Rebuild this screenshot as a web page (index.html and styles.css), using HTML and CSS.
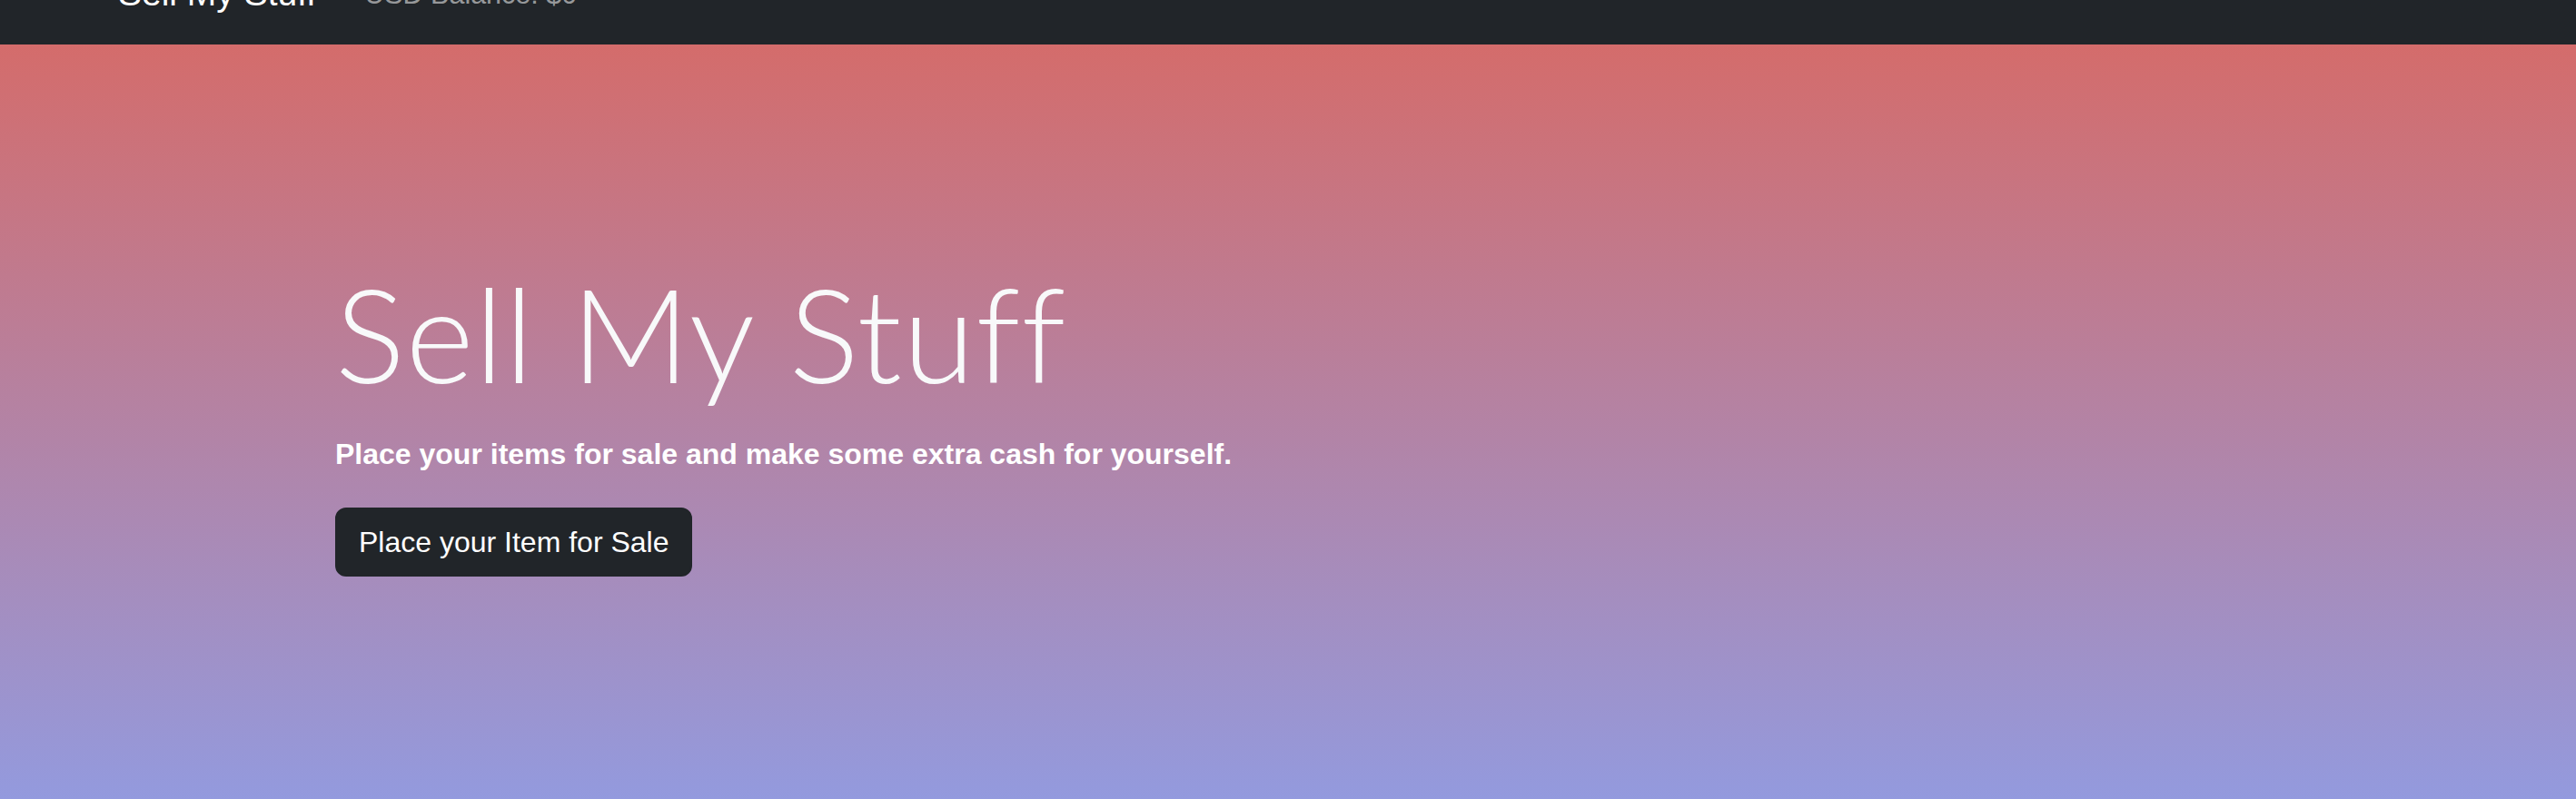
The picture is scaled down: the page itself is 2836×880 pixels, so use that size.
FILE: index.html
```html
<!DOCTYPE html>
<html lang="en">
<head>
<meta charset="utf-8">
<title>Sell My Stuff</title>
<link rel="stylesheet" href="styles.css">
</head>
<body>
<div class="page">
  <nav class="navbar">
    <a class="brand" href="#">Sell My Stuff</a>
    <a class="nav-link" href="#">USD Balance: $0</a>
  </nav>
  <header class="hero">
    <div class="hero-inner">
      <h1 class="display">Sell My Stuff</h1>
      <p class="lead">Place your items for sale and make some extra cash for yourself.</p>
      <a class="btn" href="#">Place your Item for Sale</a>
    </div>
  </header>
</div>
</body>
</html>
```
FILE: styles.css
```css
html, body {
  margin: 0;
  padding: 0;
}
body {
  font-family: "Liberation Sans", Arial, sans-serif;
  font-size: 32px;
  line-height: 1.5;
  color: #212529;
  background: #fff;
  overflow: hidden;
}
a { text-decoration: none; }

.page {
  margin-top: -63px;
}

.navbar {
  height: 112px;
  box-sizing: border-box;
  padding: 16px 0 16px 130px;
  background: #212529;
  display: flex;
  align-items: center;
}
.brand {
  color: #fff;
  font-size: 39px;
  line-height: 60px;
  padding: 10px 0;
  margin-right: 37px;
}
.nav-link {
  color: rgba(255, 255, 255, 0.55);
  font-size: 30.5px;
  line-height: 48px;
  padding: 16px;
}

.hero {
  height: 900px;
  background: linear-gradient(to bottom, #d46c6b 0px, #939ade 832px);
}
.hero-inner {
  padding: 232px 0 0 369px;
  display: flex;
  flex-direction: column;
  align-items: flex-start;
}
.display {
  margin: 0;
  font-family: Lato, "Liberation Sans", sans-serif;
  font-weight: 300;
  font-size: 144px;
  line-height: 1.2;
  letter-spacing: 1.1px;
  color: #f8f9fa;
}
.lead {
  margin: 22px 0 0;
  font-weight: 700;
  font-size: 32px;
  line-height: 48px;
  color: #fff;
}
.btn {
  margin-top: 35px;
  display: inline-block;
  padding: 12px 24px;
  border: 2px solid #212529;
  border-radius: 12px;
  background: #212529;
  color: #fff;
  font-size: 32px;
  line-height: 48px;
}
```
